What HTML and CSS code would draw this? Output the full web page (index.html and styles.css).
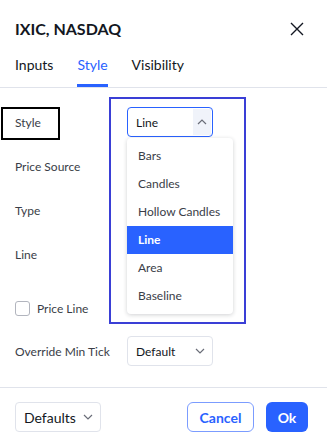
FILE: index.html
```html
<!DOCTYPE html>
<html lang="en">
<head>
    <meta charset="UTF-8">
    <meta name="viewport" content="width=device-width, initial-scale=1.0">
    <title>IXIC, NASDAQ</title>
    <link rel="stylesheet" href="styles.css">
</head>
<body>
    <div class="dialog">
        <div class="header">
            <h1 class="title">IXIC, NASDAQ</h1>
            <button class="close" aria-label="Close">
                <svg width="14" height="14" viewBox="0 0 14 14"><path d="M1 1L13 13M13 1L1 13" stroke="#131722" stroke-width="1.4" fill="none"/></svg>
            </button>
        </div>

        <div class="tabs">
            <span class="tab">Inputs</span>
            <span class="tab active">Style</span>
            <span class="tab">Visibility</span>
        </div>

        <div class="content">
            <div class="row">
                <span class="label">Style</span>
                <div class="select open">
                    <span>Line</span>
                    <span class="arrow">
                        <svg width="10" height="6" viewBox="0 0 10 6"><path d="M1 5L5 1L9 5" stroke="#6a6d78" stroke-width="1.2" fill="none"/></svg>
                    </span>
                </div>
            </div>
            <div class="row"><span class="label">Price Source</span></div>
            <div class="row"><span class="label">Type</span></div>
            <div class="row"><span class="label">Line</span></div>
            <div class="row row-check">
                <span class="checkbox"></span>
                <span class="label">Price Line</span>
            </div>
            <div class="row">
                <span class="label">Override Min Tick</span>
                <div class="select">
                    <span>Default</span>
                    <span class="arrow">
                        <svg width="10" height="6" viewBox="0 0 10 6"><path d="M1 1L5 5L9 1" stroke="#6a6d78" stroke-width="1.2" fill="none"/></svg>
                    </span>
                </div>
            </div>

            <!-- open list of the Style select -->
            <ul class="dropdown">
                <li>Bars</li>
                <li>Candles</li>
                <li>Hollow Candles</li>
                <li class="selected">Line</li>
                <li>Area</li>
                <li>Baseline</li>
            </ul>

            <!-- annotation boxes -->
            <div class="mark mark-label"></div>
            <div class="mark mark-list"></div>
        </div>

        <div class="footer">
            <div class="select defaults">
                <span>Defaults</span>
                <span class="arrow">
                    <svg width="10" height="6" viewBox="0 0 10 6"><path d="M1 1L5 5L9 1" stroke="#6a6d78" stroke-width="1.2" fill="none"/></svg>
                </span>
            </div>
            <div class="actions">
                <button class="btn btn-outline">Cancel</button>
                <button class="btn btn-primary">Ok</button>
            </div>
        </div>
    </div>
</body>
</html>
```

FILE: styles.css
```css
body {
    margin: 0;
    background: #ffffff;
    color: #131722;
    font-family: Lato, "Noto Sans", sans-serif;
    font-size: 12px;
}
.dialog {
    width: 327px;
    height: 443px;
    background: #ffffff;
}
.header {
    display: flex;
    justify-content: space-between;
    align-items: center;
    padding: 19px 23px 0 15px;
    height: 20px;
}
.title {
    margin: 0;
    font-size: 16px;
    font-weight: bold;
    line-height: 20px;
    color: #131722;
}
.close {
    border: none;
    background: none;
    padding: 0;
    width: 14px;
    height: 14px;
    display: flex;
}
.tabs {
    display: flex;
    gap: 24px;
    margin-top: 16px;
    padding: 0 15px;
    border-bottom: 1px solid #e0e3eb;
}
.tab {
    font-size: 14px;
    line-height: 20px;
    padding-bottom: 9px;
    border-bottom: 3px solid transparent;
    color: #131722;
}
.tab.active {
    color: #2962ff;
    border-bottom-color: #2962ff;
}
.content {
    position: relative;
    padding: 19px 0 21px 15px;
    border-bottom: 1px solid #e0e3eb;
}
.row {
    display: grid;
    grid-template-columns: 112px auto;
    align-items: center;
    height: 30px;
    margin-bottom: 14px;
}
.row:nth-child(4) {
    margin-bottom: 24px;
}
.row:nth-child(5) {
    margin-bottom: 13px;
}
.row:nth-child(6) {
    margin-bottom: 0;
}
.row-check {
    display: flex;
    gap: 7px;
}
.label {
    color: #3a3d47;
}
.checkbox {
    width: 13px;
    height: 13px;
    border: 1px solid #b2b5be;
    border-radius: 3px;
}
.select {
    display: flex;
    justify-content: space-between;
    align-items: center;
    box-sizing: border-box;
    width: 86px;
    height: 30px;
    padding: 0 7px 0 8px;
    border: 1px solid #e0e3eb;
    border-radius: 4px;
    color: #131722;
}
.select.open {
    border-color: #2962ff;
    padding-right: 1px;
}
.select.open .arrow {
    background: #f0f3fa;
    height: 26px;
    width: 18px;
}
.arrow {
    display: flex;
    align-items: center;
    justify-content: center;
}
.dropdown {
    position: absolute;
    top: 50px;
    left: 127px;
    width: 106px;
    margin: 0;
    padding: 4px 0;
    list-style: none;
    background: #ffffff;
    border-radius: 4px;
    box-shadow: 0 1px 4px rgba(19, 23, 34, 0.2);
}
.dropdown li {
    height: 28px;
    line-height: 28px;
    padding-left: 11px;
    color: #3a3d47;
}
.dropdown li.selected {
    background: #2962ff;
    color: #ffffff;
    font-weight: bold;
}
.mark {
    position: absolute;
    box-sizing: border-box;
}
.mark-label {
    top: 19px;
    left: 1px;
    width: 59px;
    height: 33px;
    border: 2px solid #000000;
}
.mark-list {
    top: 9px;
    left: 109px;
    width: 137px;
    height: 227px;
    border: 2px solid #3a3fd6;
}
.footer {
    display: flex;
    justify-content: space-between;
    align-items: center;
    padding: 14px 19px 0 15px;
}
.defaults {
    width: 86px;
    font-size: 14px;
}
.actions {
    display: flex;
    gap: 12px;
}
.btn {
    height: 30px;
    border-radius: 6px;
    font-family: inherit;
    font-size: 14px;
    font-weight: bold;
    cursor: pointer;
}
.btn-outline {
    width: 67px;
    background: #ffffff;
    color: #2962ff;
    border: 1px solid #7b9cff;
}
.btn-primary {
    width: 42px;
    background: #2962ff;
    color: #ffffff;
    border: none;
}
```
